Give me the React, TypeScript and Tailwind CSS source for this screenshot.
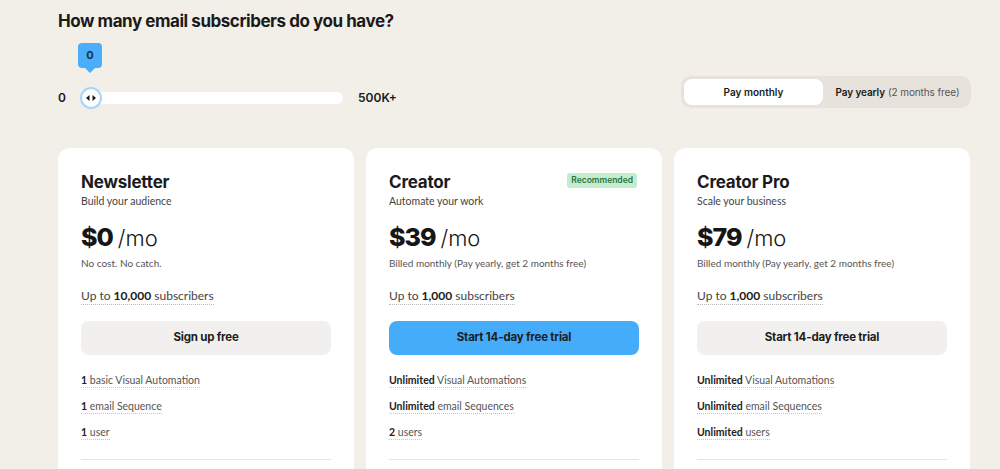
import React from "react";

const head = { fontFamily: "Inter, 'Liberation Sans', sans-serif" };
const body = { fontFamily: "Lato, 'Liberation Sans', sans-serif" };

type Plan = {
  name: string;
  sub: string;
  price: string;
  note: string;
  subs: string;
  cta: string;
  primary?: boolean;
  badge?: boolean;
  features: [string, string][];
};

const plans: Plan[] = [
  {
    name: "Newsletter",
    sub: "Build your audience",
    price: "$0",
    note: "No cost. No catch.",
    subs: "10,000",
    cta: "Sign up free",
    features: [
      ["1", "basic Visual Automation"],
      ["1", "email Sequence"],
      ["1", "user"],
    ],
  },
  {
    name: "Creator",
    sub: "Automate your work",
    price: "$39",
    note: "Billed monthly (Pay yearly, get 2 months free)",
    subs: "1,000",
    cta: "Start 14-day free trial",
    primary: true,
    badge: true,
    features: [
      ["Unlimited", "Visual Automations"],
      ["Unlimited", "email Sequences"],
      ["2", "users"],
    ],
  },
  {
    name: "Creator Pro",
    sub: "Scale your business",
    price: "$79",
    note: "Billed monthly (Pay yearly, get 2 months free)",
    subs: "1,000",
    cta: "Start 14-day free trial",
    features: [
      ["Unlimited", "Visual Automations"],
      ["Unlimited", "email Sequences"],
      ["Unlimited", "users"],
    ],
  },
];

function Card({ p }: { p: Plan }) {
  return (
    <div className="bg-white rounded-[12px] px-[23px] pt-[23px] h-[340px] flex flex-col">
      <div className="flex items-start justify-between">
        <div style={head} className="text-[17px] leading-[22px] font-bold text-[#1b1b1b] tracking-[-0.2px]">
          {p.name}
        </div>
        {p.badge && (
          <div
            style={head}
            className="mt-[2px] mr-[2px] bg-[#c6ecd0] text-[#27773f] text-[8.5px] font-semibold px-[4px] h-[15px] leading-[15px] rounded-[3px]"
          >
            Recommended
          </div>
        )}
      </div>
      <div style={body} className="text-[10.5px] leading-[16px] text-[#444]">
        {p.sub}
      </div>
      <div style={head} className="mt-[10px] h-[36px] flex items-baseline text-[#161616]">
        <span className="text-[25px] font-extrabold tracking-[-1px] leading-[36px]">{p.price}</span>
        <span className="text-[22px] font-light ml-[5px] leading-[36px]">/mo</span>
      </div>
      <div style={body} className="text-[10px] leading-[16px] text-[#555]">
        {p.note}
      </div>
      <div className="mt-[11px] h-[18px]">
        <span
          style={body}
          className="text-[12px] leading-[18px] text-[#444] border-b border-dotted border-[#bbb] pb-[1px]"
        >
          Up to <b className="font-bold text-[#1b1b1b]">{p.subs}</b> subscribers
        </span>
      </div>
      <div
        style={head}
        className={`mt-[21px] h-[34px] rounded-[8px] flex items-center justify-center text-[11.5px] font-bold tracking-[-0.2px] text-[#1d1d1d] ${
          p.primary ? "bg-[#45acfa]" : "bg-[#f1f0ee]"
        }`}
      >
        {p.cta}
      </div>
      <div className="mt-[11px] flex flex-col gap-[8px]">
        {p.features.map(([b, t], i) => (
          <div key={i} className="h-[18px]">
            <span
              style={body}
              className="text-[10.5px] leading-[18px] text-[#555] border-b border-dotted border-[#c4c4c4] pb-[1px]"
            >
              <b className="font-bold text-[#222]">{b}</b> {t}
            </span>
          </div>
        ))}
      </div>
      <div className="mt-[23px] border-t border-[#e6e6e6]" />
    </div>
  );
}

export default function App() {
  return (
    <div className="w-[1000px] h-[469px] overflow-hidden bg-[#f2efe9]">
      <div className="ml-[58px] w-[913px]">
        <div style={head} className="pt-[9px] h-[33px] text-[17px] leading-[24px] font-bold text-[#1a1a1a] tracking-[-0.45px]">
          How many email subscribers do you have?
        </div>
        <div className="flex justify-between items-start">
          <div className="pt-[54px]">
            <div className="flex items-center h-[22px]">
              <span style={head} className="text-[12px] font-semibold text-[#1a1a1a] w-[22px]">0</span>
              <div className="relative w-[263px] h-[12px] bg-white rounded-full">
                <div className="absolute left-0 top-[-5px] w-[22px] h-[22px] rounded-full bg-white border-2 border-[#a5d6fb] flex items-center justify-center">
                  <svg width="10" height="6" viewBox="0 0 10 6">
                    <path d="M0 3 L3.5 0 V6 Z" fill="#1a1a1a" />
                    <path d="M10 3 L6.5 0 V6 Z" fill="#1a1a1a" />
                  </svg>
                </div>
                <div className="absolute left-[-2px] top-[-49px] flex flex-col items-center">
                  <div style={head} className="w-[24px] h-[25px] rounded-[4px] bg-[#4aaefa] flex items-center justify-center text-[11px] font-bold text-[#17324a]">
                    0
                  </div>
                  <svg width="10" height="5" viewBox="0 0 10 5" className="block">
                    <path d="M0 0 H10 L5 5 Z" fill="#4aaefa" />
                  </svg>
                </div>
              </div>
              <span style={head} className="ml-[15px] text-[12px] font-semibold text-[#1a1a1a]">500K+</span>
            </div>
          </div>
          <div className="mt-[43px] w-[290px] h-[32px] rounded-[10px] bg-[#e7e3dc] p-[3px] flex">
            <div style={head} className="w-[139px] h-[26px] rounded-[8px] bg-white flex items-center justify-center text-[10px] font-semibold text-[#1a1a1a]">
              Pay monthly
            </div>
            <div style={head} className="flex-1 flex items-center justify-center pl-[4px] text-[10px] text-[#1a1a1a] tracking-[-0.1px]">
              <span className="font-semibold">Pay yearly</span>
              <span className="ml-[3px] text-[#555]">(2 months free)</span>
            </div>
          </div>
        </div>
        <div className="mt-[39px] grid grid-cols-3 gap-[12px] w-[912px]">
          {plans.map((p) => (
            <Card key={p.name} p={p} />
          ))}
        </div>
      </div>
    </div>
  );
}
